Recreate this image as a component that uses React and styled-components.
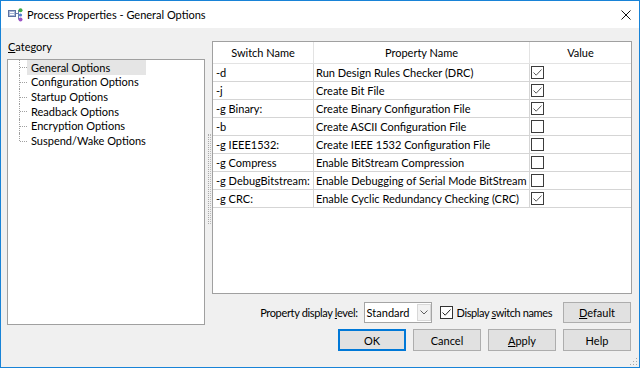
import React from "react";
import styled, { createGlobalStyle, css } from "styled-components";

const GlobalStyle = createGlobalStyle`
  html, body { margin: 0; padding: 0; background: #ffffff; }
  body {
    font-family: Lato, "Segoe UI", "Noto Sans", sans-serif;
    font-size: 11px;
    color: #000;
  }
  *, *::before, *::after { box-sizing: border-box; }
  #root { width: 640px; height: 368px; }
`;

const Window = styled.div`
  position: relative;
  width: 640px;
  height: 368px;
  border: 1px solid #1883d7;
  display: flex;
  flex-direction: column;
  background: #f0f0f0;
  overflow: hidden;
`;

const TitleBar = styled.div`
  flex: 0 0 27px;
  display: flex;
  align-items: center;
  background: #ffffff;
  padding: 0 8px 0 7px;
`;

const AppIcon = styled.svg`
  flex: none;
  margin-right: 4px;
`;

const Title = styled.div`
  font-size: 11px;
  line-height: 14px;
  padding-top: 1px;
`;

const CloseGlyph = styled.svg`
  flex: none;
  margin-left: auto;
`;

const Body = styled.div`
  flex: 1;
  display: flex;
  padding: 13px 7px 0 6px;
`;

const LeftCol = styled.div`
  width: 198px;
  display: flex;
  flex-direction: column;
`;

const GroupLabel = styled.div`
  height: 18px;
  line-height: 12px;
  padding-left: 1px;
`;

const Mnemonic = styled.u`
  text-decoration: underline;
  text-underline-offset: 1px;
  text-decoration-thickness: 1px;
`;

const TreeBox = styled.div`
  height: 266px;
  background: #ffffff;
  border: 1px solid #a0a0a0;
`;

const TreeList = styled.ul`
  list-style: none;
  margin: 0;
  padding: 0;
`;

const TreeRow = styled.li`
  display: flex;
  height: 14.66px;
`;

const Branch = styled.span`
  position: relative;
  width: 19px;
  flex: none;
  &::before {
    content: "";
    position: absolute;
    left: 11px;
    top: 0;
    bottom: ${(p) => (p.$last ? "50%" : "0")};
    border-left: 1px dotted #a0a0a0;
  }
  &::after {
    content: "";
    position: absolute;
    left: 12px;
    top: 50%;
    width: 7px;
    border-top: 1px dotted #a0a0a0;
  }
`;

const NodeLabel = styled.span`
  display: flex;
  align-items: center;
  padding-left: 4px;
  white-space: nowrap;
  ${(p) =>
    p.$selected &&
    css`
      width: 119px;
      background: #e5e5e5;
    `}
`;

const Splitter = styled.div`
  width: 7px;
  height: 283px;
  display: flex;
  justify-content: center;
  align-items: center;
  padding: 0 0 8px 1px;
`;

const Grip = styled.div`
  width: 3px;
  height: 90px;
  border-left: 1px dotted #a8a8a8;
  border-right: 1px dotted #b8b8b8;
`;

const RightCol = styled.div`
  width: 420px;
  display: flex;
  flex-direction: column;
`;

const ListFrame = styled.div`
  height: 253px;
  background: #ffffff;
  border: 1px solid #a0a0a0;
`;

const GridRow = styled.div`
  display: grid;
  grid-template-columns: 101px 216px 1fr;
  height: ${(p) => (p.$header ? 22 : 18)}px;
`;

const Cell = styled.div`
  display: flex;
  align-items: center;
  padding-left: ${(p) => p.$pad ?? 3}px;
  white-space: nowrap;
  overflow: hidden;
  border-bottom: 1px solid #d5d5d5;
  border-right: 1px solid #d5d5d5;
  &:last-child {
    border-right: none;
  }
`;

const HeadCell = styled(Cell)`
  justify-content: center;
  padding-left: 0;
  border-color: #e3e3e3;
`;

const Box = styled.span`
  width: 13px;
  height: 13px;
  flex: none;
  border: 1px solid ${(p) => (p.$dark ? "#333333" : "#3c3c3c")};
  background: #ffffff;
  display: inline-flex;
  align-items: center;
  justify-content: center;
`;

const ControlsRow = styled.div`
  display: flex;
  align-items: center;
  justify-content: flex-end;
  margin-top: 8px;
  height: 21px;
  padding-right: 1px;
`;

const FieldLabel = styled.span`
  margin-right: 6px;
  white-space: nowrap;
  letter-spacing: -0.35px;
`;

const Select = styled.div`
  width: 68px;
  height: 21px;
  border: 1px solid #a5a5a5;
  background: #ffffff;
  display: flex;
  margin-right: 8px;
`;

const SelectText = styled.span`
  flex: 1;
  padding-left: 2px;
  display: flex;
  align-items: center;
`;

const SelectButton = styled.span`
  width: 14px;
  margin: 1px 0;
  border: 1px solid #d8d8d8;
  background: #f2f2f2;
  display: flex;
  align-items: center;
  justify-content: center;
`;

const CheckLabel = styled.label`
  display: flex;
  align-items: center;
  gap: 4px;
  white-space: nowrap;
  margin-right: 11px;
  letter-spacing: -0.4px;
`;

const Button = styled.button`
  width: 68px;
  height: ${(p) => (p.$short ? 21 : 22)}px;
  padding: 0;
  font: inherit;
  color: #000;
  background: #e1e1e1;
  border: 1px solid #adadad;
  ${(p) =>
    p.$primary &&
    css`
      border-color: #0078d7;
      box-shadow: inset 0 0 0 1px #0078d7;
    `}
`;

const ButtonRow = styled.div`
  display: flex;
  justify-content: flex-end;
  gap: 7px;
  margin-top: 6px;
  padding-right: 1px;
`;

const SizeGrip = styled.svg`
  position: absolute;
  right: 1px;
  bottom: 1px;
`;

const Check = ({ color = "#555" }) => (
  <svg width="11" height="11" viewBox="0 0 11 11">
    <polyline points="1.5,5.5 4.2,8.2 9.5,2.5" fill="none" stroke={color} strokeWidth="1" />
  </svg>
);

const CheckBox = ({ checked, dark }) => (
  <Box $dark={dark}>{checked && <Check color={dark ? "#222" : "#5a5a5a"} />}</Box>
);

const categories = [
  "General Options",
  "Configuration Options",
  "Startup Options",
  "Readback Options",
  "Encryption Options",
  "Suspend/Wake Options",
];

const rows = [
  ["-d", "Run Design Rules Checker (DRC)", true],
  ["-j", "Create Bit File", true],
  ["-g Binary:", "Create Binary Configuration File", true],
  ["-b", "Create ASCII Configuration File", false],
  ["-g IEEE1532:", "Create IEEE 1532 Configuration File", false],
  ["-g Compress", "Enable BitStream Compression", false],
  ["-g DebugBitstream:", "Enable Debugging of Serial Mode BitStream", false],
  ["-g CRC:", "Enable Cyclic Redundancy Checking (CRC)", true],
];

export default function App() {
  return (
    <>
      <GlobalStyle />
      <Window>
        <TitleBar>
          <AppIcon width="15" height="14" viewBox="0 0 15 14">
            <rect x="0.5" y="2.5" width="7" height="6" fill="#a9b8d6" stroke="#5d73a3" />
            <line x1="2" y1="4.5" x2="6" y2="4.5" stroke="#ffffff" />
            <line x1="2" y1="6.5" x2="6" y2="6.5" stroke="#ffffff" />
            <line x1="7.5" y1="5.5" x2="10.5" y2="5.5" stroke="#6a7fae" />
            <line x1="10.5" y1="2" x2="10.5" y2="11.5" stroke="#6a7fae" />
            <circle cx="12.5" cy="2.3" r="2" fill="#3faa4c" />
            <circle cx="12.5" cy="7" r="1.6" fill="#4f7fd0" />
            <circle cx="12.5" cy="11.6" r="2" fill="#9b55c6" />
          </AppIcon>
          <Title>Process Properties - General Options</Title>
          <CloseGlyph width="10" height="10" viewBox="0 0 10 10">
            <path d="M0.5 0.5 L9.5 9.5 M9.5 0.5 L0.5 9.5" stroke="#111" strokeWidth="1" />
          </CloseGlyph>
        </TitleBar>

        <Body>
          <LeftCol>
            <GroupLabel>
              <Mnemonic>C</Mnemonic>ategory
            </GroupLabel>
            <TreeBox>
              <TreeList>
                {categories.map((c, i) => (
                  <TreeRow key={c}>
                    <Branch $last={i === categories.length - 1} />
                    <NodeLabel $selected={i === 0}>{c}</NodeLabel>
                  </TreeRow>
                ))}
              </TreeList>
            </TreeBox>
          </LeftCol>

          <Splitter>
            <Grip />
          </Splitter>

          <RightCol>
            <ListFrame>
              <GridRow $header>
                <HeadCell>Switch Name</HeadCell>
                <HeadCell>Property Name</HeadCell>
                <HeadCell>Value</HeadCell>
              </GridRow>
              {rows.map(([sw, name, val]) => (
                <GridRow key={sw}>
                  <Cell $pad={3}>{sw}</Cell>
                  <Cell $pad={2}>{name}</Cell>
                  <Cell $pad={1}>
                    <CheckBox checked={val} />
                  </Cell>
                </GridRow>
              ))}
            </ListFrame>

            <ControlsRow>
              <FieldLabel>
                Property display <Mnemonic>l</Mnemonic>evel:
              </FieldLabel>
              <Select>
                <SelectText>Standard</SelectText>
                <SelectButton>
                  <svg width="8" height="5" viewBox="0 0 8 5">
                    <polyline points="0.5,0.5 4,4 7.5,0.5" fill="none" stroke="#606060" strokeWidth="1" />
                  </svg>
                </SelectButton>
              </Select>
              <CheckLabel>
                <CheckBox checked dark />
                <span>
                  Display <Mnemonic>s</Mnemonic>witch names
                </span>
              </CheckLabel>
              <Button $short>
                <Mnemonic>D</Mnemonic>efault
              </Button>
            </ControlsRow>

            <ButtonRow>
              <Button $primary>OK</Button>
              <Button>Cancel</Button>
              <Button>
                <Mnemonic>A</Mnemonic>pply
              </Button>
              <Button>Help</Button>
            </ButtonRow>
          </RightCol>
        </Body>

        <SizeGrip width="9" height="9" viewBox="0 0 9 9">
          <rect x="7" y="1" width="1" height="1" fill="#a8a8a8" />
          <rect x="4" y="4" width="1" height="1" fill="#a8a8a8" />
          <rect x="7" y="4" width="1" height="1" fill="#a8a8a8" />
          <rect x="1" y="7" width="1" height="1" fill="#a8a8a8" />
          <rect x="4" y="7" width="1" height="1" fill="#a8a8a8" />
          <rect x="7" y="7" width="1" height="1" fill="#a8a8a8" />
        </SizeGrip>
      </Window>
    </>
  );
}
